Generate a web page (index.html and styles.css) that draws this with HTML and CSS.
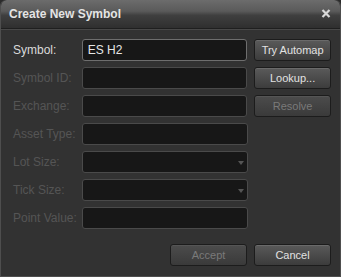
FILE: index.html
```html
<!DOCTYPE html>
<html>
<head>
<meta charset="utf-8">
<link rel="stylesheet" href="styles.css">
</head>
<body>
<div class="dialog">
  <div class="titlebar">
    <span class="title">Create New Symbol</span>
    <svg class="close" width="10" height="9" viewBox="0 0 10 9"><path d="M1.5 1 L8.5 8 M8.5 1 L1.5 8" stroke="#d8d8d8" stroke-width="2.2" fill="none"/></svg>
  </div>
  <div class="content">
    <div class="form">
      <div class="row">
        <label class="lbl active">Symbol:</label>
        <div class="field active-field">ES H2</div>
        <button class="btn">Try Automap</button>
      </div>
      <div class="row">
        <label class="lbl">Symbol ID:</label>
        <div class="field"></div>
        <button class="btn">Lookup...</button>
      </div>
      <div class="row">
        <label class="lbl">Exchange:</label>
        <div class="field"></div>
        <button class="btn disabled">Resolve</button>
      </div>
      <div class="row">
        <label class="lbl">Asset Type:</label>
        <div class="field"></div>
      </div>
      <div class="row">
        <label class="lbl">Lot Size:</label>
        <div class="field select"><span class="arrow"></span></div>
      </div>
      <div class="row">
        <label class="lbl">Tick Size:</label>
        <div class="field select"><span class="arrow"></span></div>
      </div>
      <div class="row">
        <label class="lbl">Point Value:</label>
        <div class="field"></div>
      </div>
    </div>
    <div class="actions">
      <button class="btn disabled">Accept</button>
      <button class="btn">Cancel</button>
    </div>
  </div>
</div>
</body>
</html>
```
FILE: styles.css
```css
html, body {
  margin: 0;
  padding: 0;
  background: #2b2b2b;
}
.dialog {
  width: 341px;
  height: 277px;
  box-sizing: border-box;
  border: 1px solid #4e4e4e;
  border-top: none;
  border-radius: 6px 6px 0 0;
  background: #323232;
  font-family: "Liberation Sans", Arial, sans-serif;
  font-size: 12px;
  display: flex;
  flex-direction: column;
  overflow: hidden;
}
.titlebar {
  height: 28px;
  flex: none;
  display: flex;
  align-items: center;
  justify-content: space-between;
  padding: 0 9px 0 8px;
  background: linear-gradient(#6c6c6c 0%, #5a5a5a 40%, #3f3f3f 55%, #2f2f2f 100%);
  border-bottom: 1px solid #1f1f1f;
  box-shadow: 0 1px 0 #484848;
  border-radius: 6px 6px 0 0;
}
.title {
  color: #e4e4e4;
  font-family: "Liberation Sans", Arial, sans-serif;
  font-weight: bold;
  font-size: 12px;
}
.close {
  display: block;
  margin-top: -1px;
}
.content {
  flex: 1;
  padding: 10px 9px 0 11px;
  display: flex;
  flex-direction: column;
}
.form {
  display: flex;
  flex-direction: column;
  gap: 6px;
}
.row {
  display: flex;
  align-items: center;
  height: 22px;
}
.lbl {
  width: 69px;
  padding-left: 1px;
  color: #555;
  font-size: 12px;
  white-space: nowrap;
}
.lbl.active {
  color: #dadada;
}
.field {
  width: 166px;
  height: 22px;
  box-sizing: border-box;
  background: #171717;
  border: 1px solid #4a4a4a;
  border-radius: 3px;
  color: #e6e6e6;
  font-size: 12px;
  line-height: 20px;
  padding-left: 5px;
  position: relative;
}
.active-field {
  border-color: #6e6e6e;
}
.arrow {
  position: absolute;
  right: 3px;
  top: 9px;
  width: 0;
  height: 0;
  border-left: 3px solid transparent;
  border-right: 3px solid transparent;
  border-top: 4px solid #555;
}
.btn {
  width: 77px;
  height: 22px;
  margin-left: 7px;
  box-sizing: border-box;
  border: 1px solid #1c1c1c;
  border-radius: 3px;
  background: linear-gradient(#5a5a5a, #3c3c3c);
  color: #e2e2e2;
  font-family: "Liberation Sans", Arial, sans-serif;
  font-size: 11px;
  padding: 0;
  box-shadow: inset 0 1px 0 #6a6a6a;
}
.btn.disabled {
  color: #7a7a7a;
  background: linear-gradient(#4c4c4c, #3a3a3a);
  box-shadow: inset 0 1px 0 #555;
}
.actions {
  display: flex;
  justify-content: flex-end;
  margin-top: 15px;
}
.actions .btn {
  margin-left: 7px;
}
```
